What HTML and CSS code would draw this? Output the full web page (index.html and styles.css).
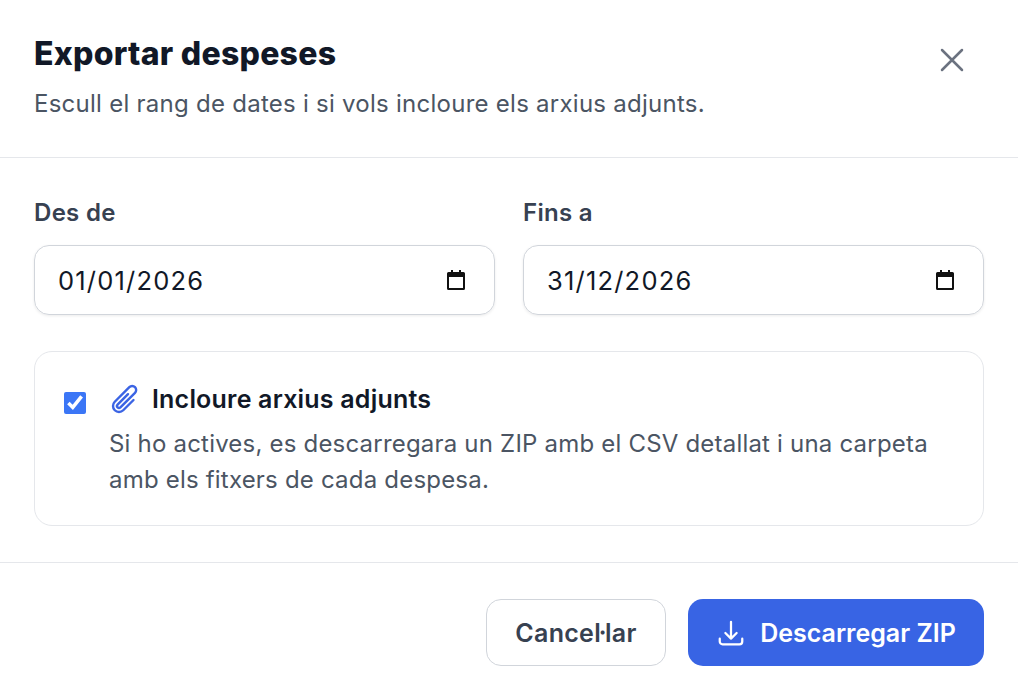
FILE: index.html
```html
<!DOCTYPE html>
<html lang="ca">
<head>
    <meta charset="UTF-8">
    <title>Exportar despeses</title>
    <link rel="stylesheet" href="styles.css">
</head>
<body>
    <div class="modal">
        <header class="modal-header">
            <div>
                <h1 class="title">Exportar despeses</h1>
                <p class="subtitle">Escull el rang de dates i si vols incloure els arxius adjunts.</p>
            </div>
            <button class="close" aria-label="Tancar">
                <svg width="40" height="40" viewBox="0 0 24 24" fill="none" stroke="#6b7280" stroke-width="1.5" stroke-linecap="round"><path d="M6 6l12 12M18 6L6 18"/></svg>
            </button>
        </header>

        <section class="modal-body">
            <div class="dates">
                <div class="field">
                    <label class="field-label">Des de</label>
                    <div class="date-input">
                        <span>01/01/2026</span>
                        <svg class="cal" width="22" height="22" viewBox="0 0 22 22"><path d="M6 1h2v2h6V1h2v2h2.5A1.5 1.5 0 0 1 20 4.5v15a1.5 1.5 0 0 1-1.500 1.500h-15A1.5 1.5 0 0 1 2 19.500v-15A1.500 1.500 0 0 1 3.500 3H6zM4 8v11h14V8z" fill="#111"/></svg>
                    </div>
                </div>
                <div class="field">
                    <label class="field-label">Fins a</label>
                    <div class="date-input">
                        <span>31/12/2026</span>
                        <svg class="cal" width="22" height="22" viewBox="0 0 22 22"><path d="M6 1h2v2h6V1h2v2h2.5A1.5 1.5 0 0 1 20 4.5v15a1.5 1.5 0 0 1-1.500 1.500h-15A1.5 1.5 0 0 1 2 19.500v-15A1.500 1.500 0 0 1 3.500 3H6zM4 8v11h14V8z" fill="#111"/></svg>
                    </div>
                </div>
            </div>

            <div class="attach">
                <input type="checkbox" class="attach-check" checked>
                <div>
                    <div class="attach-title">
                        <svg width="32" height="32" viewBox="0 0 24 24" fill="none" stroke="#3b64e4" stroke-width="1.800" stroke-linecap="round" stroke-linejoin="round"><path d="M18.375 12.739l-7.693 7.693a4.500 4.500 0 0 1-6.364-6.364l10.940-10.940A3 3 0 1 1 19.500 7.372L8.552 18.320m.009-.01l-.01.01m5.699-9.941l-7.810 7.810a1.500 1.500 0 0 0 2.112 2.130"/></svg>
                        <span>Incloure arxius adjunts</span>
                    </div>
                    <p class="attach-text">Si ho actives, es descarregara un ZIP amb el CSV detallat i una carpeta amb els fitxers de cada despesa.</p>
                </div>
            </div>
        </section>

        <footer class="modal-footer">
            <button class="btn btn-cancel">Cancel·lar</button>
            <button class="btn btn-primary">
                <svg width="30" height="30" viewBox="0 0 24 24" fill="none" stroke="#fff" stroke-width="1.800" stroke-linecap="round" stroke-linejoin="round"><path d="M3 16.500v2.250A2.250 2.250 0 0 0 5.250 21h13.500A2.250 2.250 0 0 0 21 18.750V16.500M16.500 12L12 16.500m0 0L7.500 12m4.500 4.500V3"/></svg>
                <span>Descarregar ZIP</span>
            </button>
        </footer>
    </div>
</body>
</html>
```

FILE: styles.css
```css
* {
    box-sizing: border-box;
}
body {
    margin: 0;
    background: #fff;
    font-family: Inter, "Liberation Sans", sans-serif;
    color: #111827;
}
.modal {
    width: 1018px;
    height: 694px;
}
.modal-header {
    display: flex;
    justify-content: space-between;
    align-items: flex-start;
    height: 158px;
    padding: 34px 34px 0;
    border-bottom: 1px solid #e5e7eb;
}
.title {
    margin: 0 0 13px;
    font-size: 32px;
    line-height: 40px;
    font-weight: 800;
    letter-spacing: 0.25px;
}
.subtitle {
    margin: 0;
    font-size: 24px;
    line-height: 34px;
    letter-spacing: 0.26px;
    color: #4b5563;
}
.close {
    display: flex;
    margin: 6px 12px 0 0;
    padding: 0;
    border: none;
    background: none;
}
.modal-body {
    padding: 39px 34px 36px;
    border-bottom: 1px solid #e5e7eb;
}
.dates {
    display: grid;
    grid-template-columns: 1fr 1fr;
    gap: 28px;
    margin-bottom: 36px;
}
.field-label {
    display: block;
    margin-bottom: 16px;
    font-size: 24px;
    line-height: 32px;
    font-weight: 600;
    letter-spacing: 0.3px;
    color: #374151;
}
.date-input {
    display: flex;
    justify-content: space-between;
    align-items: center;
    height: 70px;
    padding: 0 27px 0 23px;
    border: 1px solid #d1d5db;
    border-radius: 15px;
    box-shadow: 0 1px 3px rgba(0, 0, 0, 0.08);
    font-size: 25.500px;
    letter-spacing: 1.2px;
}
.attach {
    display: flex;
    gap: 23px;
    height: 175px;
    padding: 29px 29px;
    border: 1px solid #e5e7eb;
    border-radius: 18px;
}
.attach-check {
    flex: none;
    width: 22px;
    height: 22px;
    margin: 11px 0 0;
    accent-color: #3b76f6;
}
.attach-title {
    display: flex;
    align-items: center;
    gap: 11px;
    height: 36px;
    font-size: 25px;
    letter-spacing: 0.2px;
    font-weight: 600;
}
.attach-text {
    margin: 9px 0 0;
    font-size: 24px;
    line-height: 36px;
    letter-spacing: 0.2px;
    color: #4b5563;
}
.modal-footer {
    display: flex;
    justify-content: flex-end;
    gap: 22px;
    padding: 36px 34px 0;
}
.btn {
    display: flex;
    align-items: center;
    justify-content: center;
    height: 67px;
    padding-bottom: 1px;
    border-radius: 15px;
    font-family: inherit;
    font-size: 25px;
    font-weight: 600;
}
.btn-cancel {
    width: 180px;
    border: 1px solid #d1d5db;
    background: #fff;
    letter-spacing: 0.3px;
    color: #374151;
}
.btn-primary {
    gap: 14px;
    width: 296px;
    border: none;
    background: #3864e4;
    color: #fff;
}
```
